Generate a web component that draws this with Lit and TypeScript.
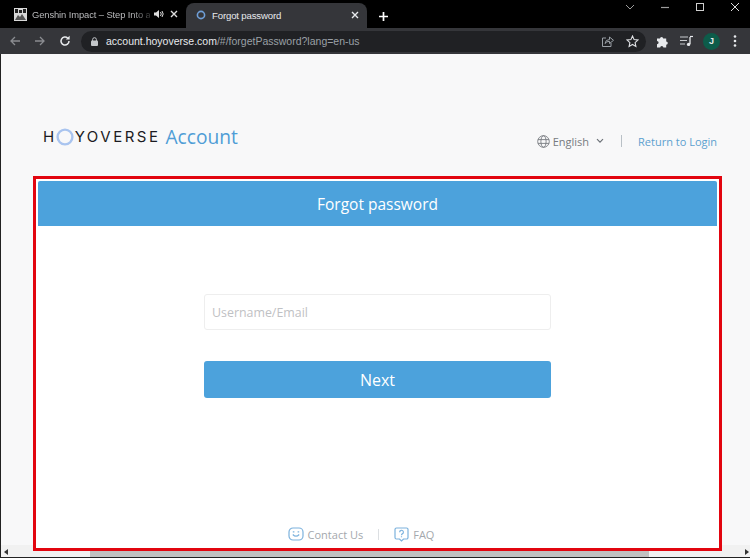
import { LitElement, html, css } from "lit";
import { customElement } from "lit/decorators.js";

@customElement("app-root")
export class AppRoot extends LitElement {
  static styles = css`
    :host { display: block; width: 750px; height: 558px; overflow: hidden; font-family: "Open Sans", "Noto Sans", sans-serif; }
    * { box-sizing: border-box; }
    svg { display: block; flex: none; }
    .tabstrip { height: 28px; background: #000; display: flex; align-items: flex-end; position: relative; color: #fff; font-family: "Liberation Sans", sans-serif; font-size: 9.4px; }
    .tab1 { width: 186px; height: 25px; display: flex; align-items: center; padding: 0 0 3px 14px; color: #b9babc; }
    .tab1 .t { width: 118px; margin-left: 5px; white-space: nowrap; flex: none; letter-spacing: -.1px; -webkit-mask-image: linear-gradient(90deg, #000 85%, rgba(0,0,0,.25)); mask-image: linear-gradient(90deg, #000 85%, rgba(0,0,0,.25)); }
    .tab1 .spk { margin-left: 4px; }
    .tab1 .x { margin-left: 5px; }
    .tab2 { width: 181px; height: 25px; background: #35363a; border-radius: 8px 8px 0 0; display: flex; align-items: center; padding: 0 7px 1px 10px; color: #e8eaed; }
    .tab2 .t { margin-left: 6px; flex: 1; font-size: 9.6px; letter-spacing: -.15px; }
    .plus { margin: 0 0 6px 11px; }
    .winctl { position: absolute; right: 10px; top: 2px; display: flex; gap: 25px; align-items: center; }
    .toolbar { height: 26px; background: #35363a; display: flex; align-items: center; padding: 0 0 0 9px; }
    .nav { display: flex; gap: 13px; align-items: center; }
    .omni { margin-left: 10px; width: 565px; height: 21px; border-radius: 11px; background: #202124; display: flex; align-items: center; padding: 0 7px 0 10px; font-family: "Liberation Sans", sans-serif; font-size: 10.5px; }
    .url { margin-left: 8px; color: #e8eaed; flex: 1; white-space: nowrap; }
    .url span { color: #9aa0a6; }
    .omni .end { display: flex; gap: 12px; align-items: center; }
    .tools { margin-left: 10px; display: flex; align-items: center; }
    .media { margin-left: 11px; }
    .avatar { margin-left: 10px; width: 17px; height: 17px; border-radius: 50%; background: #0d5c4a; color: #e8eaed; font: 700 9px "Liberation Sans", sans-serif; display: flex; align-items: center; justify-content: center; }
    .dots { margin-left: 13px; }
    .page { position: relative; height: 504px; background: #f8f8f9; border-left: 1px solid #222; padding: 68px 28px 0 32px; overflow: hidden; }
    .head { height: 30px; margin-bottom: 24px; padding: 0 5px 0 10px; display: flex; align-items: center; }
    .logo { display: flex; align-items: center; color: #1b1b22; font-family: Inter, sans-serif; font-size: 15px; font-weight: 400; line-height: 30px; }
    .logo .h { letter-spacing: 1.5px; }
    .logo .ring { margin: 0 1px 0 0; }
    .logo .rest { letter-spacing: 2.5px; }
    .acct { margin-left: 5px; color: #4f9dd6; font-size: 19.2px; letter-spacing: 0; font-family: "Open Sans", sans-serif; font-weight: 400; }
    .right { margin-left: auto; padding-top: 8px; display: flex; align-items: center; font-size: 11px; color: #777b80; }
    .lang { margin-left: 3px; }
    .chev { margin-left: 7px; }
    .sep { width: 1px; height: 12px; background: #b9c0c6; margin: 0 16px 0 17px; }
    .ret { color: #5ca0cf; }
    .frame { position: relative; z-index: 1; height: 375px; border: 3px solid #e2050f; padding: 2px 2px 0; background: #fff; display: flex; flex-direction: column; }
    .bar { height: 45px; background: #4ca2dc; border-radius: 2px 2px 0 0; color: #fff; font-size: 15.5px; display: flex; align-items: center; justify-content: center; flex: none; }
    .body { flex: 1; display: flex; flex-direction: column; align-items: center; padding-top: 68px; }
    .field { width: 347px; height: 36px; border: 1px solid #eeeeee; border-radius: 3px; background: #fff; color: #bfc1c4; font-size: 12.4px; display: flex; align-items: center; padding: 0 7px; }
    .btn { width: 347px; height: 37px; margin-top: 31px; border-radius: 3px; background: #4ca2dc; color: #fff; font-size: 16px; font-weight: 500; display: flex; align-items: center; justify-content: center; }
    .foot { margin-top: auto; margin-bottom: 4px; margin-right: 33px; height: 20px; display: flex; align-items: center; color: #a4a8ad; font-size: 11px; }
    .foot .l { margin-left: 4px; }
    .foot .div { width: 1px; height: 11px; background: #dcdfe2; margin: 0 15px 0 15px; }
    .sb { position: absolute; left: 0; right: 0; bottom: 1px; height: 12px; background: #f1f1f1; display: flex; align-items: flex-end; justify-content: space-between; padding: 0 1px 2px 3px; }
    .thumb { position: absolute; left: 89px; width: 559px; bottom: 0; height: 6px; background: #c1c1c1; }
    .base { position: absolute; left: 0; right: 0; bottom: 0; height: 1px; background: #222; z-index: 2; }
  `;

  render() {
    return html`
      <div class="tabstrip">
        <div class="tab1">
          <svg width="13" height="13" viewBox="0 0 13 13"><rect width="13" height="13" fill="#d8d8d8"/><path d="M1 1h3v4H1zM5 2h3v3H5zM9 1h3v4H9z" fill="#222"/><path d="M1 12l3-5 2 2 2-3 4 6z" fill="#555"/></svg>
          <span class="t">Genshin Impact – Step Into a</span>
          <svg class="spk" width="10" height="10" viewBox="0 0 10 10"><path d="M0 3.500h2L5 1v8L2 6.500H0z" fill="#ddd"/><path d="M6.500 3q1.500 2 0 4M8 2q2.400 3 0 6" stroke="#ddd" fill="none"/></svg>
          <svg class="x" width="10" height="10" viewBox="0 0 10 10"><path d="M2 2l6 6M8 2l-6 6" stroke="#ddd" stroke-width="1.400"/></svg>
        </div>
        <div class="tab2">
          <svg width="10" height="10" viewBox="0 0 10 10"><circle cx="5" cy="5" r="3.600" fill="none" stroke="#6f9fd8" stroke-width="1.600"/></svg>
          <span class="t">Forgot password</span>
          <svg width="10" height="10" viewBox="0 0 10 10"><path d="M2 2l6 6M8 2l-6 6" stroke="#e8eaed" stroke-width="1.400"/></svg>
        </div>
        <svg class="plus" width="11" height="11" viewBox="0 0 11 11"><path d="M5.500 1v9M1 5.500h9" stroke="#fff" stroke-width="1.700"/></svg>
        <div class="winctl">
          <svg width="10" height="10" viewBox="0 0 10 10"><path d="M1 3l4 4 4-4" stroke="#9c9c9c" fill="none"/></svg>
          <svg width="10" height="10" viewBox="0 0 10 10"><path d="M1 5.500h8" stroke="#9c9c9c" stroke-width="1.200"/></svg>
          <svg width="10" height="10" viewBox="0 0 10 10"><rect x="1.500" y="1.500" width="7" height="7" fill="none" stroke="#cfcfcf"/></svg>
          <svg width="10" height="10" viewBox="0 0 10 10"><path d="M1 1l8 8M9 1l-8 8" stroke="#dcdcdc"/></svg>
        </div>
      </div>
      <div class="toolbar">
        <div class="nav">
          <svg width="12" height="12" viewBox="0 0 12 12"><path d="M11 6H2M6 2L2 6l4 4" stroke="#8a8c90" stroke-width="1.300" fill="none"/></svg>
          <svg width="12" height="12" viewBox="0 0 12 12"><path d="M1 6h9M6 2l4 4-4 4" stroke="#8a8c90" stroke-width="1.300" fill="none"/></svg>
          <svg width="12" height="12" viewBox="0 0 12 12"><path d="M10 6a4 4 0 1 1-1.200-2.800" stroke="#e8eaed" stroke-width="1.500" fill="none"/><path d="M10.600 0.800v3.800H6.800z" fill="#e8eaed"/></svg>
        </div>
        <div class="omni">
          <svg width="7" height="9" viewBox="0 0 7 9"><rect y="3.500" width="7" height="5.500" rx="1" fill="#c4c7ca"/><path d="M1.600 4V2.600a1.900 1.900 0 0 1 3.800 0V4" stroke="#c4c7ca" fill="none"/></svg>
          <span class="url">account.hoyoverse.com<span>/#/forgetPassword?lang=en-us</span></span>
          <div class="end">
            <svg width="13" height="13" viewBox="0 0 13 13"><path d="M5 3H1.500v8.500h8.500V8" stroke="#9aa0a6" fill="none"/><path d="M4 8.500Q4.500 4.500 8.500 4.500V2l4 3.300-4 3.200V6.300Q5.500 6.300 4 8.500z" stroke="#9aa0a6" fill="none"/></svg>
            <svg width="13" height="13" viewBox="0 0 13 13"><path d="M6.500 1l1.600 3.600 3.900.4-2.900 2.600.8 3.900-3.400-2-3.400 2 .8-3.900L1 5l3.900-.4z" stroke="#e0e2e5" stroke-width="1.100" fill="none"/></svg>
          </div>
        </div>
        <div class="tools">
          <svg width="13" height="13" viewBox="0 0 13 13"><path d="M1 3.500h3a1.600 1.600 0 1 1 3.200 0h3v3a1.600 1.600 0 1 1 0 3.200v2.800H7.400a1.600 1.600 0 1 0-3.200 0H1V9.200a1.600 1.600 0 1 0 0-3.200z" fill="#e8eaed"/></svg>
          <svg class="media" width="13" height="12" viewBox="0 0 13 12"><path d="M0 2h8M0 5.500h7M0 9h5" stroke="#c8cacd" stroke-width="1.200"/><path d="M10 2v7" stroke="#e8eaed" stroke-width="1.300"/><path d="M10 1.500h3" stroke="#e8eaed" stroke-width="1.200"/><circle cx="8.600" cy="9.400" r="1.700" fill="#e8eaed"/></svg>
          <div class="avatar">J</div>
          <svg class="dots" width="4" height="12" viewBox="0 0 4 12"><circle cx="2" cy="1.500" r="1.300" fill="#e8eaed"/><circle cx="2" cy="6" r="1.300" fill="#e8eaed"/><circle cx="2" cy="10.500" r="1.300" fill="#e8eaed"/></svg>
        </div>
      </div>
      <div class="page">
        <div class="head">
          <div class="logo">
            <span class="h">H</span>
            <svg class="ring" width="18" height="18" viewBox="0 0 18 18"><circle cx="9" cy="9" r="7.400" fill="none" stroke="#a9c4ef" stroke-width="2.400"/></svg>
            <span class="rest">YOVERSE</span>
            <span class="acct">Account</span>
          </div>
          <div class="right">
            <svg width="13" height="13" viewBox="0 0 13 13" fill="none" stroke="#777b80" stroke-width=".9"><circle cx="6.500" cy="6.500" r="5.800"/><ellipse cx="6.500" cy="6.500" rx="2.600" ry="5.800"/><path d="M1 4.600h11M1 8.400h11"/></svg>
            <span class="lang">English</span>
            <svg class="chev" width="8" height="6" viewBox="0 0 8 6"><path d="M1 1.200l3 3 3-3" stroke="#6d7278" stroke-width="1.200" fill="none"/></svg>
            <span class="sep"></span>
            <span class="ret">Return to Login</span>
          </div>
        </div>
        <div class="frame">
          <div class="bar">Forgot password</div>
          <div class="body">
            <div class="field">Username/Email</div>
            <div class="btn">Next</div>
            <div class="foot">
              <svg width="16" height="14" viewBox="0 0 16 14" fill="none" stroke="#7cb2dd" stroke-width="1.200"><rect x="1" y="1" width="14" height="12" rx="4"/><path d="M4.800 7.500q3.200 3.400 6.400 0"/><path d="M4.800 4.800h1.600M9.600 4.800h1.600"/></svg>
              <span class="l">Contact Us</span>
              <span class="div"></span>
              <svg width="15" height="15" viewBox="0 0 15 15" fill="none" stroke="#7cb2dd" stroke-width="1.200"><path d="M2.500 1h10A1.500 1.500 0 0 1 14 2.500v8a1.500 1.500 0 0 1-1.500 1.500H9.500L7.500 14 5.500 12h-3A1.500 1.500 0 0 1 1 10.500v-8A1.500 1.500 0 0 1 2.500 1z"/><path d="M5.600 5.200a1.900 1.900 0 1 1 2.700 1.700c-.6.300-.8.700-.8 1.300M7.500 9.300v1"/></svg>
              <span class="l">FAQ</span>
            </div>
          </div>
        </div>
        <div class="sb">
          <svg width="4" height="6" viewBox="0 0 4 6"><path d="M4 0v6L0 3z" fill="#333"/></svg>
          <svg width="4" height="6" viewBox="0 0 4 6"><path d="M0 0v6l4-3z" fill="#333"/></svg>
          <div class="thumb"></div>
        </div>
        <div class="base"></div>
      </div>
    `;
  }
}
